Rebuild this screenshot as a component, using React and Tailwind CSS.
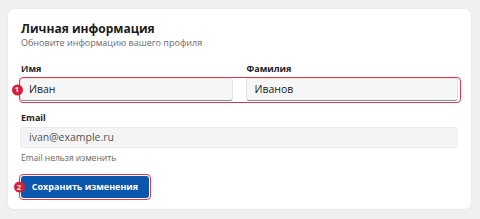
function Badge({ n, className }) {
  return (
    <div
      className={
        "absolute top-1/2 -translate-y-1/2 w-[11px] h-[11px] rounded-full bg-[#d71f3a] text-white text-[7.5px] font-bold flex items-center justify-center leading-none " +
        className
      }
    >
      {n}
    </div>
  );
}

function Field({ label, value, disabled }) {
  return (
    <div className="flex flex-col gap-[3px]">
      <label className="text-[9px] leading-[12px] font-bold text-[#222] pl-px">{label}</label>
      <div
        className={
          disabled
            ? "h-[21px] rounded-[3px] bg-[#f4f4f4] border border-[#ececec] pl-2 flex items-center text-[10.5px] text-[#555]"
            : "h-[23px] rounded-[3px] bg-[#f6f6f6] border border-[#e3e3e3] border-b-[#8d8d8d] pl-2 flex items-center text-[10.5px] text-[#222]"
        }
      >
        {value}
      </div>
    </div>
  );
}

export default function App() {
  const font = { fontFamily: '"Open Sans", "Noto Sans", sans-serif' };
  return (
    <div
      className="w-full min-h-[219px] bg-[#f0f0f0] pl-2 pr-[9px] pt-[9px] pb-[10px]"
      style={font}
    >
      <div className="bg-white rounded-[6px] shadow-[0_0_2px_rgba(0,0,0,0.08)] pl-3 pr-[13px] pt-[12px] pb-[11px] flex flex-col">
        <div className="flex flex-col pl-px">
          <h2 className="text-[12px] leading-[16px] font-bold text-[#1b1b1b]">
            Личная информация
          </h2>
          <p className="text-[9px] leading-[12px] text-[#6b6b6b]">
            Обновите информацию вашего профиля
          </p>
        </div>

        <div className="relative mt-[14px] grid grid-cols-2 gap-x-[13px]">
          <Field label="Имя" value="Иван" />
          <Field label="Фамилия" value="Иванов" />
          <div className="pointer-events-none absolute -left-[1px] -right-[3px] top-[13.5px] -bottom-[1.5px] rounded-[4px] border-[1.5px] border-[#d83a50]" />
          <div className="absolute left-0 right-0 top-[15px] bottom-0">
            <Badge n="1" className="-left-[8.5px]" />
          </div>
        </div>

        <div className="mt-[11px] flex flex-col gap-[4px]">
          <Field label="Email" value="ivan@example.ru" disabled />
          <p className="text-[8.5px] leading-[11px] text-[#666] pl-px">
            Email нельзя изменить
          </p>
        </div>

        <div className="relative mt-[13px] self-start ml-px">
          <button className="h-[22px] w-[128px] rounded-[3px] bg-[#0b57ad] text-white text-[9px] font-bold flex items-center justify-center">
            Сохранить изменения
          </button>
          <div className="pointer-events-none absolute -left-[2px] -right-[1.5px] -top-[2px] -bottom-[1.5px] rounded-[4px] border-[1.5px] border-[#d83a50]" />
          <Badge n="2" className="-left-[7.5px]" />
        </div>
      </div>
    </div>
  );
}
